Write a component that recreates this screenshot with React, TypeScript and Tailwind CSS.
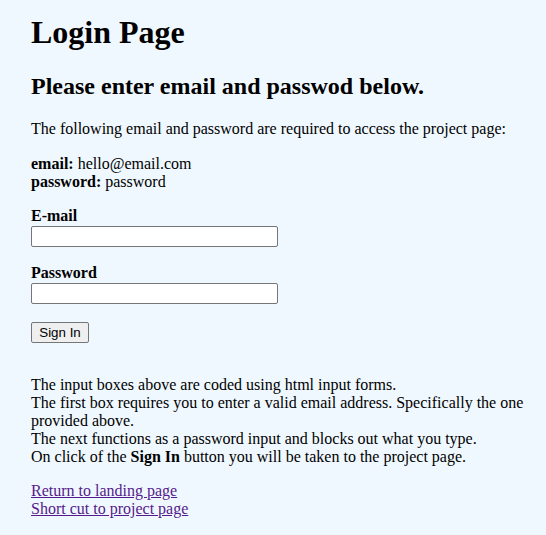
import React from 'react';

export default function App() {
  const serif = { fontFamily: '"Liberation Serif", "Times New Roman", serif' };

  return (
    <div
      className="min-h-screen bg-[#f0f8ff] text-black text-[16px] leading-[18px] pl-[31px] pr-[8px] pt-[14px] pb-[16px]"
      style={serif}
    >
      <h1 className="text-[32px] font-bold leading-[37px] mb-[21px]">Login Page</h1>
      <h2 className="text-[24px] font-bold leading-[28px] mb-[20px]">
        Please enter email and passwod below.
      </h2>

      <p className="mb-[17px]">
        The following email and password are required to access the project page:
      </p>

      <p className="mb-[16px]">
        <b>email:</b> hello@email.com
        <br />
        <b>password:</b> password
      </p>

      <form onSubmit={(e) => e.preventDefault()}>
        <label htmlFor="email" className="block font-bold">
          E-mail
        </label>
        <input
          id="email"
          type="email"
          className="block mt-[1px] w-[247px] h-[21px] bg-white border border-[#767676] rounded-[2px] px-[2px] text-[13px] outline-none"
        />

        <label htmlFor="password" className="block font-bold mt-[17px]">
          Password
        </label>
        <input
          id="password"
          type="password"
          className="block mt-[1px] w-[247px] h-[21px] bg-white border border-[#767676] rounded-[2px] px-[2px] text-[13px] outline-none"
        />

        <button
          type="submit"
          className="block mt-[18px] h-[21px] w-[58px] bg-[#efefef] border border-[#767676] rounded-[2px] text-[13.33px] leading-[15px] text-black"
          style={{ fontFamily: '"Liberation Sans", Arial, sans-serif' }}
        >
          Sign In
        </button>
      </form>

      <p className="mt-[33px] mb-[16px]">
        The input boxes above are coded using html input forms.
        <br />
        The first box requires you to enter a valid email address. Specifically the one provided above.
        <br />
        The next functions as a password input and blocks out what you type.
        <br />
        On click of the <b>Sign In</b> button you will be taken to the project page.
      </p>

      <p>
        <a href="#" className="text-[#551a8b] underline">
          Return to landing page
        </a>
        <br />
        <a href="#" className="text-[#551a8b] underline">
          Short cut to project page
        </a>
      </p>
    </div>
  );
}
